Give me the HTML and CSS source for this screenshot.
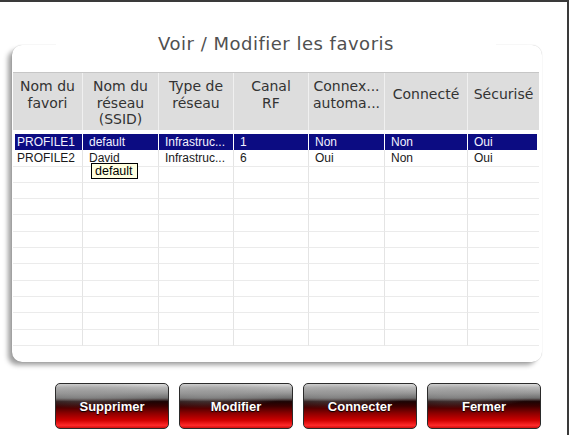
FILE: index.html
```html
<!DOCTYPE html>
<html lang="fr">
<head>
<meta charset="utf-8">
<title>Voir / Modifier les favoris</title>
<link rel="stylesheet" href="styles.css">
</head>
<body>
<div class="screen">
  <div class="panel">
    <div class="title">Voir / Modifier les favoris</div>
    <div class="cols head">
      <div class="h">Nom du<br>favori</div>
      <div class="h">Nom du<br>réseau<br>(SSID)</div>
      <div class="h">Type de<br>réseau</div>
      <div class="h">Canal<br>RF</div>
      <div class="h">Connex...<br>automa...</div>
      <div class="h single">Connecté</div>
      <div class="h single">Sécurisé</div>
    </div>
    <div class="rows">
      <div class="cols row sel">
        <div class="c first">PROFILE1</div><div class="c">default</div><div class="c">Infrastruc...</div><div class="c">1</div><div class="c">Non</div><div class="c">Non</div><div class="c last">Oui</div>
      </div>
      <div class="cols row">
        <div class="c first">PROFILE2</div><div class="c tipcell">David<span class="tooltip">default</span></div><div class="c">Infrastruc...</div><div class="c">6</div><div class="c">Oui</div><div class="c">Non</div><div class="c last">Oui</div>
      </div>
      <div class="cols row"><div class="c first"></div><div class="c"></div><div class="c"></div><div class="c"></div><div class="c"></div><div class="c"></div><div class="c last"></div></div>
      <div class="cols row"><div class="c first"></div><div class="c"></div><div class="c"></div><div class="c"></div><div class="c"></div><div class="c"></div><div class="c last"></div></div>
      <div class="cols row"><div class="c first"></div><div class="c"></div><div class="c"></div><div class="c"></div><div class="c"></div><div class="c"></div><div class="c last"></div></div>
      <div class="cols row"><div class="c first"></div><div class="c"></div><div class="c"></div><div class="c"></div><div class="c"></div><div class="c"></div><div class="c last"></div></div>
      <div class="cols row"><div class="c first"></div><div class="c"></div><div class="c"></div><div class="c"></div><div class="c"></div><div class="c"></div><div class="c last"></div></div>
      <div class="cols row"><div class="c first"></div><div class="c"></div><div class="c"></div><div class="c"></div><div class="c"></div><div class="c"></div><div class="c last"></div></div>
      <div class="cols row"><div class="c first"></div><div class="c"></div><div class="c"></div><div class="c"></div><div class="c"></div><div class="c"></div><div class="c last"></div></div>
      <div class="cols row"><div class="c first"></div><div class="c"></div><div class="c"></div><div class="c"></div><div class="c"></div><div class="c"></div><div class="c last"></div></div>
      <div class="cols row"><div class="c first"></div><div class="c"></div><div class="c"></div><div class="c"></div><div class="c"></div><div class="c"></div><div class="c last"></div></div>
      <div class="cols row"><div class="c first"></div><div class="c"></div><div class="c"></div><div class="c"></div><div class="c"></div><div class="c"></div><div class="c last"></div></div>
      <div class="cols row"><div class="c first"></div><div class="c"></div><div class="c"></div><div class="c"></div><div class="c"></div><div class="c"></div><div class="c last"></div></div>
    </div>
  </div>
  <div class="buttons">
    <button class="btn">Supprimer</button>
    <button class="btn">Modifier</button>
    <button class="btn">Connecter</button>
    <button class="btn">Fermer</button>
  </div>
</div>
</body>
</html>
```

FILE: styles.css
```css
html, body {
  margin: 0;
  padding: 0;
  background: #ffffff;
}

.screen {
  width: 567px;
  height: 433px;
  border-top: 2px solid #3a3a3a;
  border-right: 2px solid #3a3a3a;
  background: #ffffff;
  overflow: hidden;
  font-family: "DejaVu Sans", Verdana, sans-serif;
}

.panel {
  display: flow-root;
  width: 530px;
  height: 317px;
  box-sizing: border-box;
  margin: 43px 0 0 12px;
  padding: 0 3px 0 1px;
  background: #ffffff;
  border-radius: 10px;
  box-shadow: -5px 4px 5px -1px rgba(0, 0, 0, 0.38), 0 0 1px rgba(0, 0, 0, 0.28);
}

.title {
  width: 440px;
  height: 22px;
  margin: -12px auto 0;
  background: #ffffff;
  text-align: center;
  font-size: 18px;
  letter-spacing: 0.5px;
  line-height: 22px;
  color: #505050;
}

.cols {
  display: grid;
  grid-template-columns: 70px 76px 75px 75px 76px 83px 71px;
}

.head {
  margin-top: 17px;
  height: 58px;
  box-sizing: border-box;
  background: #dddddd;
  border-top: 1px solid #c6c6c6;
}

.h {
  box-sizing: border-box;
  padding-top: 5px;
  text-align: center;
  font-size: 14px;
  line-height: 16.5px;
  color: #333333;
  white-space: nowrap;
  border-right: 1px solid #f0f0f0;
}

.h:last-child {
  border-right: none;
}

.h.single {
  padding-top: 13px;
}

.rows {
  padding-top: 4px;
}

.row {
  height: 16.3px;
}

.c {
  position: relative;
  box-sizing: border-box;
  padding-left: 6px;
  font-family: "Liberation Sans", Arial, sans-serif;
  font-size: 12px;
  line-height: 16px;
  color: #1a1a1a;
  white-space: nowrap;
  border-right: 1px solid #e4e4e4;
  border-bottom: 1px solid #ebebeb;
}

.c.first {
  padding-left: 4px;
}

.c.last {
  border-right: none;
}

.sel .c {
  background: #0c0c82;
  color: #f2f2ff;
  border-right-color: #ffffff;
  border-bottom-color: #ffffff;
}

.sel .c.first {
  box-shadow: inset 2px 0 #ffffff;
}

.sel .c.last {
  box-shadow: inset -2px 0 #ffffff;
}

.tooltip {
  position: absolute;
  left: 8px;
  top: 13px;
  z-index: 2;
  padding: 0 4px 0 3px;
  background: #ffffe1;
  border: 1px solid #000000;
  font-size: 12.5px;
  line-height: 14px;
  color: #000000;
}

.buttons {
  display: flex;
  gap: 10px;
  margin: 21px 0 0 55px;
}

.btn {
  width: 114px;
  height: 46px;
  box-sizing: border-box;
  padding: 0;
  border: 1px solid #2b2b2b;
  border-radius: 5px;
  font-family: "Liberation Sans", Arial, sans-serif;
  font-weight: bold;
  font-size: 13px;
  color: #ffffff;
  text-shadow: 0 1px 1px #000000;
  background:
    radial-gradient(ellipse 95% 45% at 25% 22%, rgba(150, 150, 150, 0.6), rgba(150, 150, 150, 0) 75%),
    linear-gradient(to bottom, #dcdcdc 0%, #b8b8b8 8%, #9a9a9a 20%, #707070 32%, #1c0404 40%, #3a0000 50%, #8a0000 66%, #cc0000 82%, #ff2a2a 94%, #d01010 100%);
}
```
